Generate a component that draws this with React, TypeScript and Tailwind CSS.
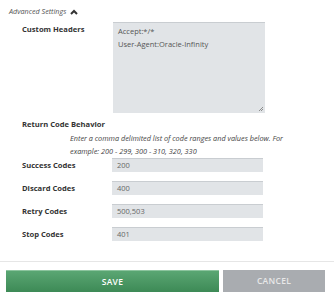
import React from "react";

const codeRows = [
  { label: "Success Codes", value: "200" },
  { label: "Discard Codes", value: "400" },
  { label: "Retry Codes", value: "500,503" },
  { label: "Stop Codes", value: "401" },
];

function CaretUp() {
  return (
    <svg width="8" height="6" viewBox="0 0 8 6" className="ml-[4px] mt-[1px]">
      <path d="M1 5 L4 2 L7 5" fill="none" stroke="#333" strokeWidth="2" />
    </svg>
  );
}

export default function App() {
  return (
    <div className="w-[334px] h-[300px] bg-white font-['Open_Sans',sans-serif] text-[#333] overflow-hidden">
      {/* Advanced settings header */}
      <div className="flex items-center pl-[9px] pt-[6px] h-[17px] text-[7.2px] italic text-[#555]">
        Advanced Settings
        <CaretUp />
      </div>

      {/* Custom headers */}
      <div className="flex pl-[22px] mt-[5px]">
        <div className="w-[91px] pt-[2px] text-[7.6px] font-bold">Custom Headers</div>
        <div className="relative w-[152px] h-[91px] bg-[#e1e4e7] border-t border-t-[#c9cdd1] px-[5px] pt-[2px] text-[7.5px] leading-[13px] text-[#555]">
          <div>Accept:*/*</div>
          <div>User-Agent:Oracle-Infinity</div>
          <svg width="6" height="6" viewBox="0 0 6 6" className="absolute right-[1px] bottom-[1px]">
            <path d="M5 1 L1 5 M5 3 L3 5" stroke="#777" strokeWidth="0.8" />
          </svg>
        </div>
      </div>

      {/* Return code behavior */}
      <div className="pl-[22px] mt-[6px] text-[7.6px] font-bold">Return Code Behavior</div>
      <div className="pl-[70px] pr-[44px] mt-[2px] text-[7.3px] italic leading-[13px] text-[#444]">
        Enter a comma delimited list of code ranges and values below. For
        example: 200 - 299, 300 - 310, 320, 330
      </div>

      <div className="flex flex-col gap-[9px] pl-[22px]">
        {codeRows.map((row) => (
          <div key={row.label} className="flex items-center h-[14px]">
            <div className="w-[90px] text-[7.6px] font-bold">{row.label}</div>
            <div className="w-[151px] h-[14px] bg-[#e1e4e7] border-t border-t-[#c9cdd1] pl-[5px] text-[7.5px] leading-[13px] text-[#666]">
              {row.value}
            </div>
          </div>
        ))}
      </div>

      <div className="mt-[20px] h-[1px] bg-[#e6e6e6]" />

      <div className="flex gap-[4px] pl-[6px] mt-[8px]">
        <button className="w-[213px] h-[22px] bg-gradient-to-b from-[#5aa673] to-[#3d8a56] border-t border-t-[#8cc49e] text-white text-[8.5px] font-semibold tracking-[0.3px]">
          SAVE
        </button>
        <button className="w-[102px] h-[22px] bg-[#a9acb0] text-[#e8e8e8] text-[8.5px] font-semibold tracking-[0.3px]">
          CANCEL
        </button>
      </div>
    </div>
  );
}
